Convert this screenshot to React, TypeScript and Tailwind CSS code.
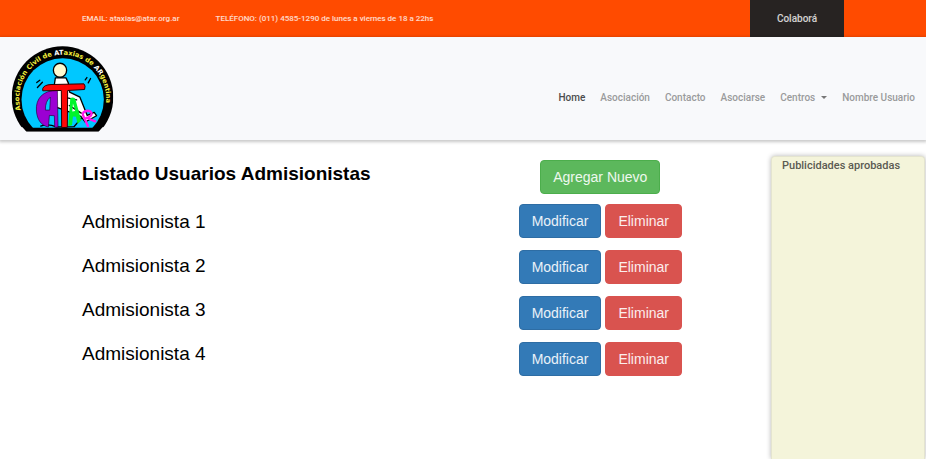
import React from "react";

const users = ["Admisionista 1", "Admisionista 2", "Admisionista 3", "Admisionista 4"];

const buttonBase = "h-[34px] rounded border px-3 text-sm leading-5 text-white/90";

function Logo() {
  return (
    <svg viewBox="34 29 307 259" className="h-[86px] w-[103px]" role="img" aria-label="Asociación Civil de Ataxias de Argentina">
      <defs>
        <path id="rim" d="M62 222 A131 131 0 1 1 314 222" />
        <clipPath id="base">
          <path d="M34 29H341V274H308L296 287H79L67 274H34Z" />
        </clipPath>
        <clipPath id="floor">
          <path d="M34 29H341V275H34Z" />
        </clipPath>
      </defs>
      <circle cx="187.5" cy="183" r="153" fill="#000" clipPath="url(#base)" />
      <circle cx="188" cy="190" r="124" fill="#00c8ff" clipPath="url(#floor)" />
      <text fontFamily="DejaVu Sans, sans-serif" fontWeight="700" fontSize="20" fill="#f5f13c">
        <textPath href="#rim" startOffset="0">
          Asociación Civil de <tspan fill="#fff">AT</tspan>axias de <tspan fill="#fff">AR</tspan>gentina
        </textPath>
      </text>
      <g stroke="#000" strokeLinecap="round" strokeLinejoin="round">
        <path d="M110 139l9-7M112 154l15-16M256 131l5-7M265 140l7-13" fill="none" strokeWidth="4" />
        <path d="M166 125 L163 145 L160 168 L166 212 L204 226 L243 241 L256 258 L290 239 L283 229 L262 238 L240 183 L209 168 L205 140 L198 125Z" fill="#fff" strokeWidth="4" />
        <ellipse cx="180" cy="102" rx="20" ry="21" fill="#fffbd0" strokeWidth="4" />
        <path d="M122 270q22-8 48 3l52-1 22-25M208 208l36 23M202 185l28 6" fill="none" strokeWidth="4" />
      </g>
      <path d="M172 163 C128 162 106 188 109 225 C111 251 124 269 145 273 L148 238 L163 239 L164 274 L174 273 Z M151 183 L149 222 L136 222 Q135 195 151 183Z" fill="#9b00d3" fillRule="evenodd" stroke="#26003c" strokeWidth="2" />
      <path d="M128 157 Q132 146 153 145 L252 143 Q258 148 254 160 L203 163 L202 274 L185 275 L184 163 L128 164Z" fill="#ff0606" stroke="#270000" strokeWidth="3" />
      <path d="M205 270 L211 186 Q218 181 226 188 L244 253 L233 264 L228 242 L219 241 L216 268 Z M219 202 L217 226 L226 225Z" fill="#00f52c" fillRule="evenodd" />
      <path d="M264 270L249 237Q247 227 262 224Q276 224 275 235Q272 244 255 247M260 245L286 256" fill="none" stroke="#ff16ed" strokeWidth="7" strokeLinecap="round" strokeLinejoin="round" />
    </svg>
  );
}

function NavLink({ children, active = false }: { children: React.ReactNode; active?: boolean }) {
  return (
    <a href="#" className={active ? "text-[#4b4c4d]" : "text-[#9a9b9c]"}>
      {children}
    </a>
  );
}

export default function App() {
  return (
    <div className="flex min-h-screen flex-col bg-white font-['Roboto',sans-serif]">
      <div className="flex h-[37px] items-center bg-[#ff4b00] pl-[82px] text-[8px] font-medium text-white/80">
        <a href="mailto:ataxias@atar.org.ar" className="mr-9">EMAIL: ataxias@atar.org.ar</a>
        <span>TELÉFONO: (011) 4585-1290 de lunes a viernes de 18 a 22hs</span>
        <button className="mr-[82px] ml-auto h-full w-[94px] bg-[#272322] text-[10px] text-white/80">Colaborá</button>
      </div>

      <header className="flex h-[103px] items-center justify-between bg-[#f8f9fb] px-[11px] shadow-[0_1px_3px_1px_rgba(0,0,0,0.22)]">
        <a href="#"><Logo /></a>
        <nav className="mt-[18px] flex items-center gap-[15px] text-[10px] leading-4 font-medium">
          <NavLink active>Home</NavLink>
          <NavLink>Asociación</NavLink>
          <NavLink>Contacto</NavLink>
          <NavLink>Asociarse</NavLink>
          <button className="flex items-center gap-[6px] text-[#9a9b9c]">
            Centros
            <span className="border-x-[3px] border-t-[3px] border-x-transparent border-t-[#777]" />
          </button>
          <NavLink>Nombre Usuario</NavLink>
        </nav>
      </header>

      <div className="flex grow pt-4">
        <main className="flex grow items-start justify-between pr-[89px] pl-[82px] font-['Liberation_Sans',Arial,sans-serif]">
          <section className="pt-1.5 text-[19px] leading-6 text-black">
            <h1 className="mb-6 font-bold">Listado Usuarios Admisionistas</h1>
            <ul className="flex flex-col gap-5">
              {users.map((user) => (
                <li key={user}>{user}</li>
              ))}
            </ul>
          </section>
          <section className="flex flex-col items-center pt-1">
            <button className={`${buttonBase} mb-[10px] border-[#4cae4c] bg-[#5cb85c]`}>Agregar Nuevo</button>
            <div className="flex flex-col gap-3">
              {users.map((user) => (
                <div key={user} className="flex gap-1">
                  <button aria-label={`Modificar ${user}`} className={`${buttonBase} border-[#2e6da4] bg-[#337ab7]`}>Modificar</button>
                  <button aria-label={`Eliminar ${user}`} className={`${buttonBase} border-[#d9534f] bg-[#d9534f]`}>Eliminar</button>
                </div>
              ))}
            </div>
          </section>
        </main>
        <aside className="mr-px w-[154px] shrink-0 rounded-t border border-b-0 border-[#e4e4cf] bg-[#f4f4da] px-[10px] pt-px shadow-[0_0_5px_rgba(0,0,0,0.3)]">
          <h2 className="text-[11px] leading-4 font-medium text-[#5b5b52]">Publicidades aprobadas</h2>
        </aside>
      </div>
    </div>
  );
}
